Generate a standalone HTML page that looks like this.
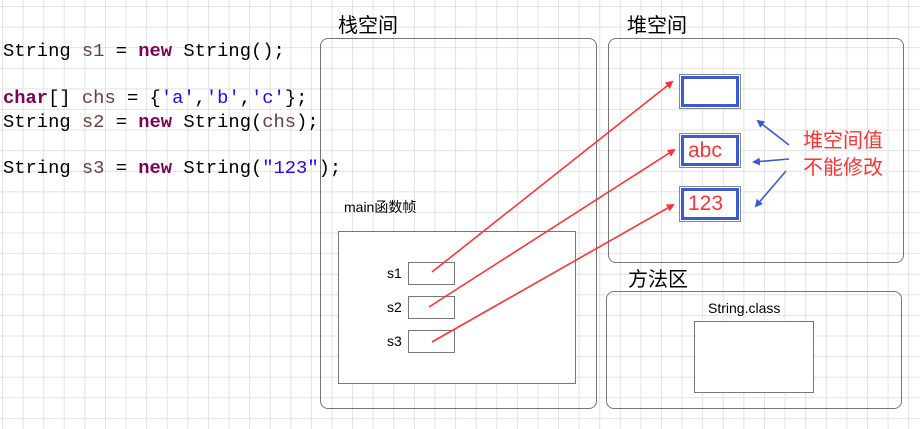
<!DOCTYPE html>
<html><head><meta charset="utf-8"><style>
html,body{margin:0;padding:0}
body{width:920px;height:429px;overflow:hidden;position:relative;background-color:#fff;
background-image:linear-gradient(to right,#e2e2e2 1px,transparent 1px),linear-gradient(to bottom,#e2e2e2 1px,transparent 1px);
background-size:20.6px 20.6px;background-position:2px 6px;font-family:"Liberation Sans","Noto Sans CJK SC",sans-serif}
.code{position:absolute;left:3px;font-family:"Liberation Mono",monospace;font-size:18.8px;color:#000;white-space:pre;line-height:22px}
.k{color:#7f0055;font-weight:bold}.v{color:#6a3e3e}.s{color:#2a00ff}
.box{position:absolute;border:1px solid #777;background:#fff;box-sizing:border-box}
.r{border-radius:8px}
.t{position:absolute;white-space:nowrap}
.hb{position:absolute;border:1px solid #888;box-sizing:border-box;background:#fff;padding:1px}
.hb div{border:3px solid #3b5bd6;height:100%;box-sizing:border-box;color:#f33;font-size:21px;line-height:26px;padding-left:4px}
</style></head><body>
<div class="code" style="top:40px">String <span class="v">s1</span> = <span class="k">new</span> String();</div>
<div class="code" style="top:87px"><span class="k">char</span>[] <span class="v">chs</span> = {<span class="s">'a'</span>,<span class="s">'b'</span>,<span class="s">'c'</span>};</div>
<div class="code" style="top:111px">String <span class="v">s2</span> = <span class="k">new</span> String(<span class="v">chs</span>);</div>
<div class="code" style="top:157px">String <span class="v">s3</span> = <span class="k">new</span> String(<span class="s">"123"</span>);</div>

<div class="t" style="left:338px;top:9px;font-size:20px">栈空间</div>
<div class="t" style="left:627px;top:9px;font-size:20px">堆空间</div>
<div class="t" style="left:628px;top:263px;font-size:20px">方法区</div>

<div class="box r" style="left:320px;top:38px;width:277px;height:371px;background:transparent"></div>
<div class="box r" style="left:608px;top:38px;width:296px;height:225px;background:transparent"></div>
<div class="box r" style="left:606px;top:291px;width:296px;height:118px;background:transparent"></div>

<div class="t" style="left:344px;top:197px;font-size:14px">main函数帧</div>
<div class="box" style="left:338px;top:231px;width:238px;height:153px"></div>
<div class="t" style="left:387px;top:265px;font-size:14px">s1</div>
<div class="t" style="left:387px;top:299px;font-size:14px">s2</div>
<div class="t" style="left:387px;top:333px;font-size:14px">s3</div>
<div class="box" style="left:408px;top:262px;width:47px;height:23px"></div>
<div class="box" style="left:408px;top:296px;width:47px;height:23px"></div>
<div class="box" style="left:408px;top:330px;width:47px;height:23px"></div>

<div class="hb" style="left:679px;top:74px;width:62px;height:35px"><div></div></div>
<div class="hb" style="left:679px;top:133px;width:62px;height:35px"><div>abc</div></div>
<div class="hb" style="left:679px;top:186px;width:62px;height:36px"><div>123</div></div>

<div class="t" style="left:803px;top:128px;font-size:20px;color:#f33;line-height:27px">堆空间值<br>不能修改</div>

<div class="t" style="left:708px;top:300px;font-size:14px">String.class</div>
<div class="box" style="left:694px;top:321px;width:120px;height:72px"></div>

<svg width="920" height="429" style="position:absolute;left:0;top:0" viewBox="0 0 920 429">
<defs>
<marker id="ar" markerWidth="8" markerHeight="8" refX="6" refY="4" orient="auto" markerUnits="userSpaceOnUse"><path d="M0,0 L8,4 L0,8 Z" fill="#f33"/></marker>
<marker id="ab" markerWidth="8" markerHeight="8" refX="6" refY="4" orient="auto" markerUnits="userSpaceOnUse"><path d="M0,0 L8,4 L0,8 Z" fill="#3b5bd6"/></marker>
</defs>
<g stroke="#f33" stroke-width="1.6" fill="none">
<path d="M432,272 L672,82" marker-end="url(#ar)"/>
<path d="M429,307 L674,150" marker-end="url(#ar)"/>
<path d="M432,342 L673,205" marker-end="url(#ar)"/>
</g>
<g stroke="#3b5bd6" stroke-width="1.6" fill="none">
<path d="M789,145 L758,121" marker-end="url(#ab)"/>
<path d="M789,159 L754,162" marker-end="url(#ab)"/>
<path d="M786,171 L756,206" marker-end="url(#ab)"/>
</g>
</svg>
</body></html>
